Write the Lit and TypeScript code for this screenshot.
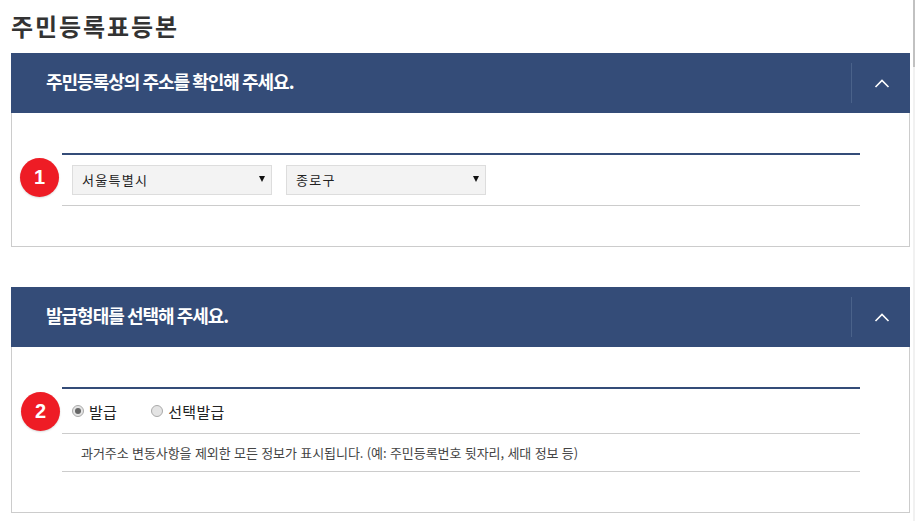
import { LitElement, html, css } from "lit";
import { customElement } from "lit/decorators.js";

const chevron = html`<svg class="chev" width="16" height="10" viewBox="0 0 16 10"><path d="M1.5 9 L8 2.5 L14.5 9" fill="none" stroke="#fff" stroke-width="1.6"/></svg>`;

@customElement("app-root")
export class AppRoot extends LitElement {
  static styles = css`
    :host { display: block; width: 915px; height: 521px; overflow: hidden; background: #fff; position: relative;
      font-family: "Noto Sans CJK KR", "Liberation Sans", sans-serif; color: #333; }
    .page { padding: 0 5px 0 11px; }
    h1 { margin: 0; height: 53px; font-size: 24px; font-weight: 700; line-height: 51px; color: #333; letter-spacing: 1.9px; }
    .sec { margin-bottom: 40px; border: 1px solid #ccc; border-top: 0; height: 194px; box-sizing: border-box; }
    .head { height: 60px; margin: 0 -1px; background: #344c78; display: flex; align-items: center; color: #fff; }
    .head h2 { flex: 1; margin: 0 0 4px; padding-left: 35px; font-size: 18px; font-weight: 700; letter-spacing: -1px; }
    .tog { width: 59px; height: 40px; border-left: 1px solid #4a628a; display: flex; align-items: center; justify-content: center; padding-left: 2px; box-sizing: border-box; }
    .body { position: relative; padding: 40px 49px 0 50px; }
    .box { border-top: 2px solid #344c78; }
    .row { height: 50px; display: flex; align-items: center; gap: 14px; padding-left: 10px; border-bottom: 1px solid #ccc; }
    .sel { width: 200px; height: 30px; box-sizing: border-box; border: 1px solid #ddd; background: #f3f3f3; display: flex; align-items: center; justify-content: space-between; padding: 0 6px 0 9px; font-size: 13px; line-height: 26px; color: #222; letter-spacing: 1.3px; }
    .tri { width: 0; height: 0; border-left: 3.5px solid transparent; border-right: 3.5px solid transparent; border-top: 6px solid #111; margin-top: -2px; }
    .num { position: absolute; width: 39px; height: 39px; border-radius: 50%; background: #ee1c25; box-shadow: 0 1px 2px rgba(0,0,0,.15); color: #fff; font-size: 20px; font-weight: 700; display: flex; align-items: center; justify-content: center; font-family: "Liberation Sans", sans-serif; }
    .n1 { left: 8px; top: 45px; }
    .n2 { left: 9px; top: 45px; }
    .r { display: flex; align-items: center; gap: 5px; font-size: 15px; letter-spacing: 0.3px; margin-right: 34px; color: #222; }
    .r b { width: 12px; height: 12px; border-radius: 50%; border: 1px solid #aaa; background: #e4e4e4; box-sizing: border-box; display: flex; align-items: center; justify-content: center; }
    .r b::after { content: ""; width: 6px; height: 6px; border-radius: 50%; }
    .r.on b::after { background: #666; }
    .row.radio { height: 44px; gap: 0; }
    .note { height: 37px; display: flex; align-items: center; padding-left: 19px; font-size: 13px; color: #444; letter-spacing: -0.07px; word-spacing: 0.6px; border-bottom: 1px solid #ccc; }
    .bar { position: absolute; right: 0; top: 0; width: 2px; height: 521px; background: #f1f1f1; }
    .thumb { width: 2px; height: 67px; background: #c1c1c1; }
  `;
  render() {
    return html`
      <div class="page">
        <h1>주민등록표등본</h1>
        <section class="sec">
          <div class="head"><h2>주민등록상의 주소를 확인해 주세요.</h2><div class="tog">${chevron}</div></div>
          <div class="body">
            <span class="num n1">1</span>
            <div class="box"><div class="row">
              <div class="sel">서울특별시<span class="tri"></span></div>
              <div class="sel">종로구<span class="tri"></span></div>
            </div></div>
          </div>
        </section>
        <section class="sec" style="height:226px">
          <div class="head"><h2>발급형태를 선택해 주세요.</h2><div class="tog">${chevron}</div></div>
          <div class="body">
            <span class="num n2">2</span>
            <div class="box">
              <div class="row radio">
                <label class="r on"><b></b>발급</label>
                <label class="r"><b></b>선택발급</label>
              </div>
              <div class="note">과거주소 변동사항을 제외한 모든 정보가 표시됩니다. (예: 주민등록번호 뒷자리, 세대 정보 등)</div>
            </div>
          </div>
        </section>
      </div>
      <div class="bar"><div class="thumb"></div></div>
    `;
  }
}
